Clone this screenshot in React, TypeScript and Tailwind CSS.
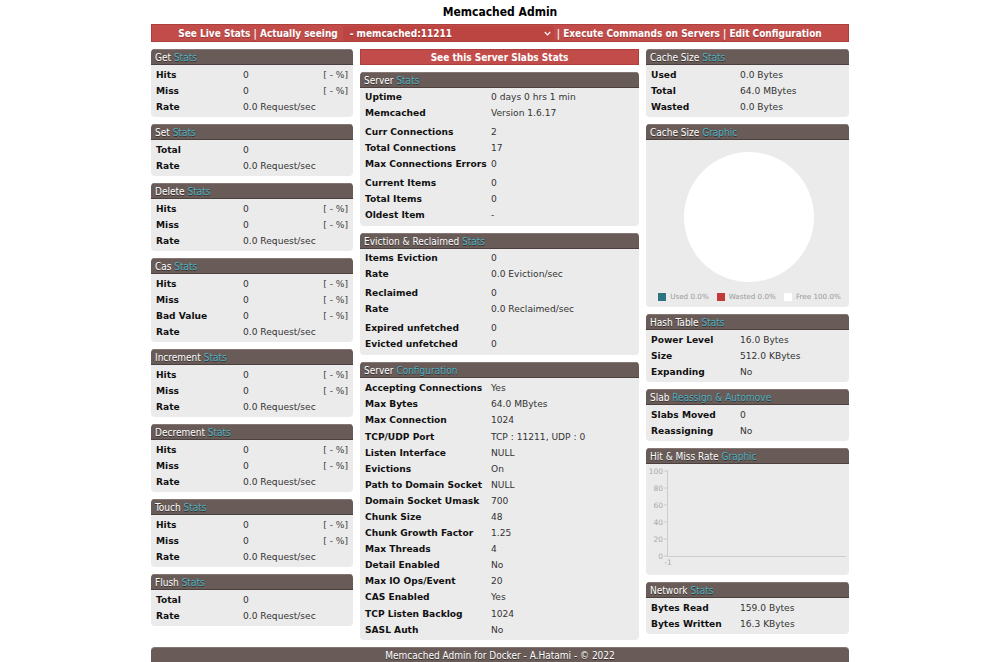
import type { ReactNode } from 'react'

type Row = { label: string; value: string; pct?: boolean }

const HEAD = "font-['DejaVu_Sans_Condensed','DejaVu_Sans',sans-serif]"
const BODY = "font-['DejaVu_Sans',sans-serif]"

function Panel({
  title,
  accent,
  children,
}: {
  title: string
  accent: string
  children: ReactNode
}) {
  return (
    <div className="overflow-hidden rounded-[4px] bg-[#ebebeb]">
      <div
        className={`${HEAD} h-[16px] border-t border-[#857874] border-b border-b-[#4a403d] bg-[#695c58] px-[4px] text-[10px] leading-[15px] text-white [text-shadow:0_1px_0_rgba(0,0,0,0.5)]`}
      >
        {title} <span className="text-[#4eb2c3]">{accent}</span>
      </div>
      {children}
    </div>
  )
}

function Rows({ rows, w, h = 'h-[16px]' }: { rows: Row[]; w: string; h?: string }) {
  return (
    <div>
      {rows.map((r, i) => (
        <div key={i} className={`flex ${h} items-center`}>
          <div className={`${w} shrink-0 font-bold text-[#111]`}>{r.label}</div>
          <div className="flex-1 text-[#333]">{r.value}</div>
          {r.pct && <div className="text-[#444]">[ - %]</div>}
        </div>
      ))}
    </div>
  )
}

function StatPanel({ title, accent, rows, w }: { title: string; accent: string; rows: Row[]; w: string }) {
  return (
    <Panel title={title} accent={accent}>
      <div className="px-[5px] pt-[3px] pb-[1px]">
        <Rows rows={rows} w={w} />
      </div>
    </Panel>
  )
}

const hitMissRate: Row[] = [
  { label: 'Hits', value: '0', pct: true },
  { label: 'Miss', value: '0', pct: true },
  { label: 'Rate', value: '0.0 Request/sec' },
]
const totalRate: Row[] = [
  { label: 'Total', value: '0' },
  { label: 'Rate', value: '0.0 Request/sec' },
]

const LEFT: { title: string; rows: Row[] }[] = [
  { title: 'Get', rows: hitMissRate },
  { title: 'Set', rows: totalRate },
  { title: 'Delete', rows: hitMissRate },
  {
    title: 'Cas',
    rows: [
      { label: 'Hits', value: '0', pct: true },
      { label: 'Miss', value: '0', pct: true },
      { label: 'Bad Value', value: '0', pct: true },
      { label: 'Rate', value: '0.0 Request/sec' },
    ],
  },
  { title: 'Increment', rows: hitMissRate },
  { title: 'Decrement', rows: hitMissRate },
  { title: 'Touch', rows: hitMissRate },
  { title: 'Flush', rows: totalRate },
]

const SERVER: Row[][] = [
  [
    { label: 'Uptime', value: '0 days 0 hrs 1 min' },
    { label: 'Memcached', value: 'Version 1.6.17' },
  ],
  [
    { label: 'Curr Connections', value: '2' },
    { label: 'Total Connections', value: '17' },
    { label: 'Max Connections Errors', value: '0' },
  ],
  [
    { label: 'Current Items', value: '0' },
    { label: 'Total Items', value: '0' },
    { label: 'Oldest Item', value: '-' },
  ],
]

const EVICTION: Row[][] = [
  [
    { label: 'Items Eviction', value: '0' },
    { label: 'Rate', value: '0.0 Eviction/sec' },
  ],
  [
    { label: 'Reclaimed', value: '0' },
    { label: 'Rate', value: '0.0 Reclaimed/sec' },
  ],
  [
    { label: 'Expired unfetched', value: '0' },
    { label: 'Evicted unfetched', value: '0' },
  ],
]

const CONFIG: Row[] = [
  { label: 'Accepting Connections', value: 'Yes' },
  { label: 'Max Bytes', value: '64.0 MBytes' },
  { label: 'Max Connection', value: '1024' },
  { label: 'TCP/UDP Port', value: 'TCP : 11211, UDP : 0' },
  { label: 'Listen Interface', value: 'NULL' },
  { label: 'Evictions', value: 'On' },
  { label: 'Path to Domain Socket', value: 'NULL' },
  { label: 'Domain Socket Umask', value: '700' },
  { label: 'Chunk Size', value: '48' },
  { label: 'Chunk Growth Factor', value: '1.25' },
  { label: 'Max Threads', value: '4' },
  { label: 'Detail Enabled', value: 'No' },
  { label: 'Max IO Ops/Event', value: '20' },
  { label: 'CAS Enabled', value: 'Yes' },
  { label: 'TCP Listen Backlog', value: '1024' },
  { label: 'SASL Auth', value: 'No' },
]

function Grouped({ groups }: { groups: Row[][] }) {
  return (
    <div className="flex flex-col gap-[3px] px-[5px] pt-[2px] pb-[2px]">
      {groups.map((g, i) => (
        <Rows key={i} rows={g} w="w-[126px]" />
      ))}
    </div>
  )
}

function Legend({ color, label }: { color: string; label: string }) {
  return (
    <div className="flex items-center gap-[4px]">
      <span className={`inline-block h-[8px] w-[8px] ${color}`} />
      <span>{label}</span>
    </div>
  )
}

function HitChart() {
  const ticks = [100, 80, 60, 40, 20, 0]
  return (
    <svg width="203" height="110" className="block">
      {ticks.map((t, i) => (
        <g key={t}>
          <text
            x="17"
            y={7 + i * 17 + 2.5}
            textAnchor="end"
            fontSize="7.5"
            fill="#aaa"
            fontFamily="DejaVu Sans, sans-serif"
          >
            {t}
          </text>
          <line x1="18" x2="21" y1={7 + i * 17} y2={7 + i * 17} stroke="#ccc" strokeWidth="1" />
        </g>
      ))}
      <line x1="21.5" x2="21.5" y1="6" y2="92" stroke="#ccc" strokeWidth="1" />
      <line x1="21" x2="200" y1="92.5" y2="92.5" stroke="#ccc" strokeWidth="1" />
      <text x="22" y="101" textAnchor="middle" fontSize="7.5" fill="#aaa" fontFamily="DejaVu Sans, sans-serif">
        -1
      </text>
    </svg>
  )
}

export default function App() {
  return (
    <div className={`${BODY} h-[662px] overflow-hidden bg-white text-[9.1px]`}>
      <div className="mx-auto w-[698px]">
        <h1 className={`${HEAD} h-[24px] pt-[5px] text-center text-[12px] leading-[15px] font-bold text-black`}>
          Memcached Admin
        </h1>

        <div
          className={`${HEAD} flex h-[18px] items-center justify-center gap-[3px] border border-[#ad3f3c] bg-[#c24c49] text-[10px] font-bold text-white [text-shadow:0_1px_0_rgba(0,0,0,0.25)]`}
        >
          <span>See Live Stats | Actually seeing</span>
          <div className="ml-[2px] flex h-[15px] w-[211px] items-center justify-between rounded-[2px] bg-[#bc4542] pr-[3px] pl-[7px]">
            <span>- memcached:11211</span>
            <svg width="7" height="5" viewBox="0 0 7 5">
              <path d="M0.8 1 L3.5 3.8 L6.2 1" fill="none" stroke="white" strokeWidth="1.2" />
            </svg>
          </div>
          <span>| Execute Commands on Servers | Edit Configuration</span>
        </div>

        <div className="mt-[7px] flex gap-[7px]">
          {/* left column */}
          <div className="flex w-[202px] flex-col gap-[7px]">
            {LEFT.map((p) => (
              <StatPanel key={p.title} title={p.title} accent="Stats" rows={p.rows} w="w-[87px]" />
            ))}
          </div>

          {/* middle column */}
          <div className="flex w-[279px] flex-col gap-[7px]">
            <div
              className={`${HEAD} flex h-[16px] items-center justify-center border border-[#ad3f3c] bg-[#c24c49] text-[10px] font-bold text-white`}
            >
              See this Server Slabs Stats
            </div>
            <Panel title="Server" accent="Stats">
              <Grouped groups={SERVER} />
            </Panel>
            <Panel title="Eviction & Reclaimed" accent="Stats">
              <Grouped groups={EVICTION} />
            </Panel>
            <Panel title="Server" accent="Configuration">
              <div className="px-[5px] pt-[3px] pb-[1px]">
                <Rows rows={CONFIG} w="w-[126px]" h="h-[16.1px]" />
              </div>
            </Panel>
          </div>

          {/* right column */}
          <div className="flex w-[203px] flex-col gap-[7px]">
            <StatPanel
              title="Cache Size"
              accent="Stats"
              w="w-[89px]"
              rows={[
                { label: 'Used', value: '0.0 Bytes' },
                { label: 'Total', value: '64.0 MBytes' },
                { label: 'Wasted', value: '0.0 Bytes' },
              ]}
            />
            <Panel title="Cache Size" accent="Graphic">
              <div className="flex h-[167px] flex-col items-center pt-[12px]">
                <div className="ml-[3px] h-[130px] w-[130px] rounded-full bg-white" />
                <div className="mt-[10px] ml-[4px] flex gap-[8px] text-[7.2px] text-[#999]">
                  <Legend color="bg-[#2c7480]" label="Used 0.0%" />
                  <Legend color="bg-[#c2393a]" label="Wasted 0.0%" />
                  <Legend color="bg-white" label="Free 100.0%" />
                </div>
              </div>
            </Panel>
            <StatPanel
              title="Hash Table"
              accent="Stats"
              w="w-[89px]"
              rows={[
                { label: 'Power Level', value: '16.0 Bytes' },
                { label: 'Size', value: '512.0 KBytes' },
                { label: 'Expanding', value: 'No' },
              ]}
            />
            <StatPanel
              title="Slab"
              accent="Reassign & Automove"
              w="w-[89px]"
              rows={[
                { label: 'Slabs Moved', value: '0' },
                { label: 'Reassigning', value: 'No' },
              ]}
            />
            <Panel title="Hit & Miss Rate" accent="Graphic">
              <div className="h-[111px]">
                <HitChart />
              </div>
            </Panel>
            <StatPanel
              title="Network"
              accent="Stats"
              w="w-[89px]"
              rows={[
                { label: 'Bytes Read', value: '159.0 Bytes' },
                { label: 'Bytes Written', value: '16.3 KBytes' },
              ]}
            />
          </div>
        </div>

        <div
          className={`${HEAD} mt-[7px] h-[16px] rounded-t-[4px] border-t border-[#857874] bg-[#695c58] text-center text-[10px] leading-[15px] text-white [text-shadow:0_1px_0_rgba(0,0,0,0.5)]`}
        >
          Memcached Admin for Docker - A.Hatami - © 2022
        </div>
      </div>
    </div>
  )
}
